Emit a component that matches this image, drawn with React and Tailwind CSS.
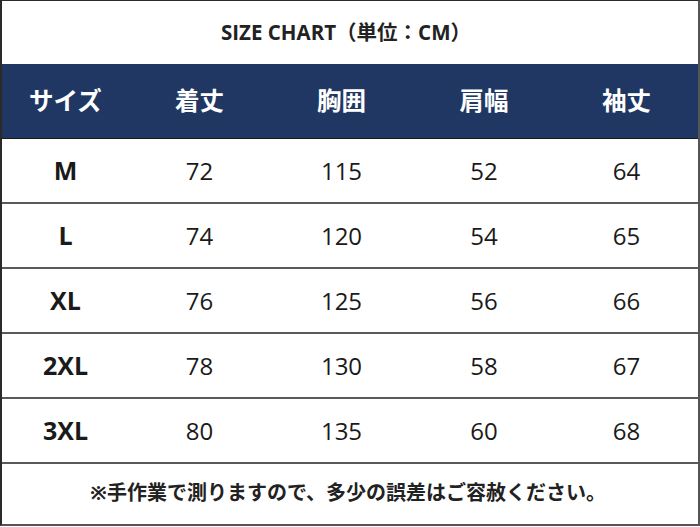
const rows = [
  ["M", 72, 115, 52, 64],
  ["L", 74, 120, 54, 65],
  ["XL", 76, 125, 56, 66],
  ["2XL", 78, 130, 58, 67],
  ["3XL", 80, 135, 60, 68],
];

const heads = ["サイズ", "着丈", "胸囲", "肩幅", "袖丈"];

const App = () => {
  return (
    <div
      className="w-[700px] h-[527px] bg-white"
      style={{ fontFamily: '"Open Sans", "Noto Sans", "Noto Sans CJK JP", sans-serif' }}
    >
      <div className="w-[700px] h-[526px] border-2 border-t border-[#2a2a2a] border-r-[#555] border-b-[#555] flex flex-col">
        <div className="h-[63px] flex items-center justify-center text-[20.5px] font-bold text-[#222] pr-[8px]">
          SIZE CHART（単位：CM）
        </div>
        <div className="h-[75px] bg-[#203763] grid grid-cols-[127px_141px_143px_142px_1fr] items-center text-white text-[24.5px] font-bold border-b border-[#1a1a1a]">
          {heads.map((h, i) => (
            <div key={i} className="text-center">{h}</div>
          ))}
        </div>
        {rows.map((r, idx) => (
          <div
            key={idx}
            className="h-[65px] grid grid-cols-[127px_141px_143px_142px_1fr] items-center border-b-2 border-[#5a5a5a] text-[#1a1a1a] text-[24px]"
          >
            {r.map((c, i) => (
              <div key={i} className={i === 0 ? "text-center font-bold text-[25px]" : "text-center"}>{c}</div>
            ))}
          </div>
        ))}
        <div className="flex-1 flex items-center justify-center text-[20px] font-bold text-[#222] pb-[2px] pr-[4px]">
          ※手作業で測りますので、多少の誤差はご容赦ください。
        </div>
      </div>
    </div>
  );
};

export default App;
